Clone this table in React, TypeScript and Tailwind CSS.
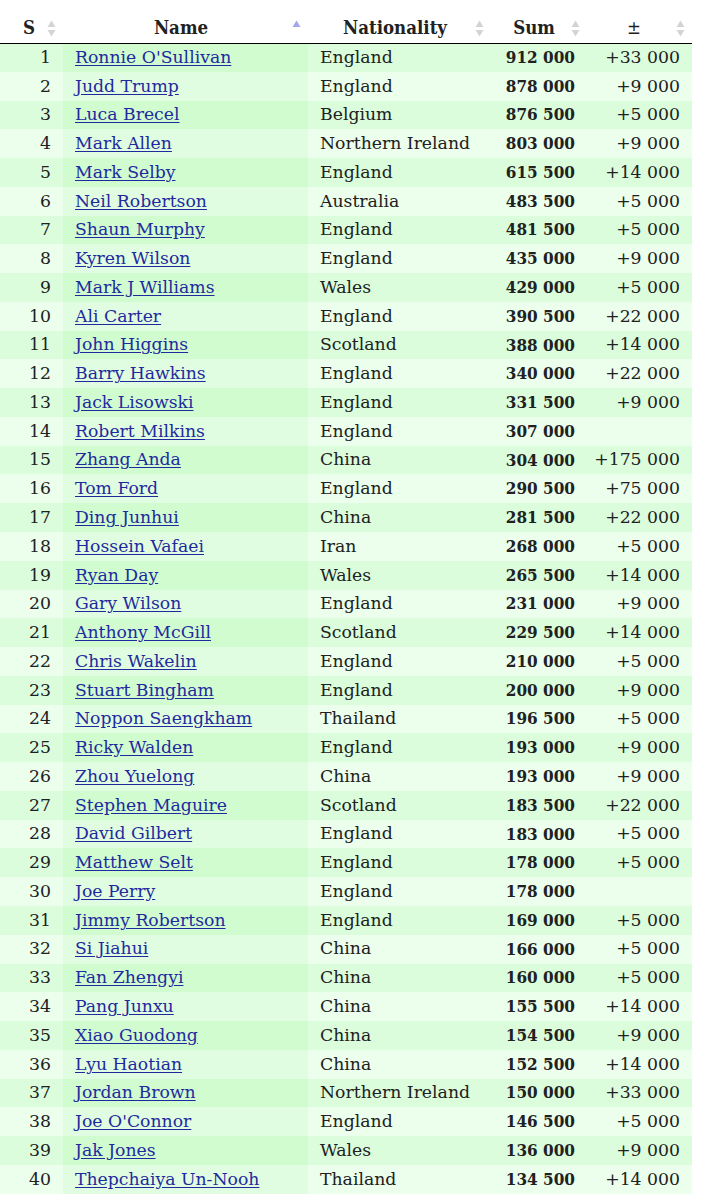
import React from 'react';

type Row = [number, string, string, string, string];

const rows: Row[] = [
    [1, "Ronnie O'Sullivan", 'England', '912 000', '+33 000'],
    [2, 'Judd Trump', 'England', '878 000', '+9 000'],
    [3, 'Luca Brecel', 'Belgium', '876 500', '+5 000'],
    [4, 'Mark Allen', 'Northern Ireland', '803 000', '+9 000'],
    [5, 'Mark Selby', 'England', '615 500', '+14 000'],
    [6, 'Neil Robertson', 'Australia', '483 500', '+5 000'],
    [7, 'Shaun Murphy', 'England', '481 500', '+5 000'],
    [8, 'Kyren Wilson', 'England', '435 000', '+9 000'],
    [9, 'Mark J Williams', 'Wales', '429 000', '+5 000'],
    [10, 'Ali Carter', 'England', '390 500', '+22 000'],
    [11, 'John Higgins', 'Scotland', '388 000', '+14 000'],
    [12, 'Barry Hawkins', 'England', '340 000', '+22 000'],
    [13, 'Jack Lisowski', 'England', '331 500', '+9 000'],
    [14, 'Robert Milkins', 'England', '307 000', ''],
    [15, 'Zhang Anda', 'China', '304 000', '+175 000'],
    [16, 'Tom Ford', 'England', '290 500', '+75 000'],
    [17, 'Ding Junhui', 'China', '281 500', '+22 000'],
    [18, 'Hossein Vafaei', 'Iran', '268 000', '+5 000'],
    [19, 'Ryan Day', 'Wales', '265 500', '+14 000'],
    [20, 'Gary Wilson', 'England', '231 000', '+9 000'],
    [21, 'Anthony McGill', 'Scotland', '229 500', '+14 000'],
    [22, 'Chris Wakelin', 'England', '210 000', '+5 000'],
    [23, 'Stuart Bingham', 'England', '200 000', '+9 000'],
    [24, 'Noppon Saengkham', 'Thailand', '196 500', '+5 000'],
    [25, 'Ricky Walden', 'England', '193 000', '+9 000'],
    [26, 'Zhou Yuelong', 'China', '193 000', '+9 000'],
    [27, 'Stephen Maguire', 'Scotland', '183 500', '+22 000'],
    [28, 'David Gilbert', 'England', '183 000', '+5 000'],
    [29, 'Matthew Selt', 'England', '178 000', '+5 000'],
    [30, 'Joe Perry', 'England', '178 000', ''],
    [31, 'Jimmy Robertson', 'England', '169 000', '+5 000'],
    [32, 'Si Jiahui', 'China', '166 000', '+5 000'],
    [33, 'Fan Zhengyi', 'China', '160 000', '+5 000'],
    [34, 'Pang Junxu', 'China', '155 500', '+14 000'],
    [35, 'Xiao Guodong', 'China', '154 500', '+9 000'],
    [36, 'Lyu Haotian', 'China', '152 500', '+14 000'],
    [37, 'Jordan Brown', 'Northern Ireland', '150 000', '+33 000'],
    [38, "Joe O'Connor", 'England', '146 500', '+5 000'],
    [39, 'Jak Jones', 'Wales', '136 000', '+9 000'],
    [40, 'Thepchaiya Un-Nooh', 'Thailand', '134 500', '+14 000'],
];

// sort arrows drawn at the right of each header cell
const SortIcon: React.FC<{ active?: boolean }> = ({ active }) => (
    <svg width="9" height="17" viewBox="0 0 9 17" className="absolute right-[7px] top-[20px]">
        {active ? (
            <path d="M4.5 0.5 L8.5 7 L0.5 7 Z" fill="#a3a8ee" />
        ) : (
            <>
                <path d="M4.5 0.5 L8.5 7 L0.5 7 Z" fill="#d4d4d4" />
                <path d="M4.5 16.5 L8.5 10 L0.5 10 Z" fill="#d4d4d4" />
            </>
        )}
    </svg>
);

const Header: React.FC<{ label: string; active?: boolean; className?: string }> = ({ label, active, className }) => (
    <th className={`relative h-[43px] align-bottom pb-[1px] text-center text-[#202122] ${className ?? ''}`}>
        <span className="font-[DejaVu_Serif_Condensed,DejaVu_Serif,serif] text-[18.5px]">{label}</span>
        <SortIcon active={active} />
    </th>
);

export default function App() {
    return (
        <div className="bg-white min-h-[1197px] text-[17.25px] text-[#202122] font-[DejaVu_Serif,serif]">
            <table className="w-[692px] table-fixed border-collapse">
                <colgroup>
                    <col className="w-[63px]" />
                    <col className="w-[245px]" />
                    <col className="w-[183px]" />
                    <col className="w-[96px]" />
                    <col className="w-[105px]" />
                </colgroup>
                <thead>
                    <tr className="border-b border-black">
                        <Header label="S" className="pr-[5px] font-bold" />
                        <Header label="Name" active className="pr-[9px] font-bold" />
                        <Header label="Nationality" className="pr-[9px] font-bold" />
                        <Header label="Sum" className="pr-[10px] font-bold" />
                        <Header label="±" className="pr-[11px] font-normal" />
                    </tr>
                </thead>
                <tbody>
                    {rows.map(([n, name, nat, sum, diff]) => {
                        const odd = n % 2 === 1;
                        const base = odd ? 'bg-[#dcfddc]' : 'bg-[#ecfeec]';
                        const sorted = odd ? 'bg-[#d0fcd0]' : 'bg-[#e1fde1]';
                        return (
                            <tr key={n} className="h-[28.77px] leading-none">
                                <td className={`${base} text-right pr-3`}>{n}</td>
                                <td className={`${sorted} pl-3 whitespace-nowrap`}>
                                    <a href="#" className="text-[#1f2a9e] underline underline-offset-2">{name}</a>
                                </td>
                                <td className={`${base} pl-3 whitespace-nowrap`}>{nat}</td>
                                <td className={`${base} text-right pr-3 font-bold font-[DejaVu_Serif_Condensed,DejaVu_Serif,serif] text-[17px]`}>{sum}</td>
                                <td className={`${base} text-right pr-3`}>{diff}</td>
                            </tr>
                        );
                    })}
                </tbody>
            </table>
        </div>
    );
}
